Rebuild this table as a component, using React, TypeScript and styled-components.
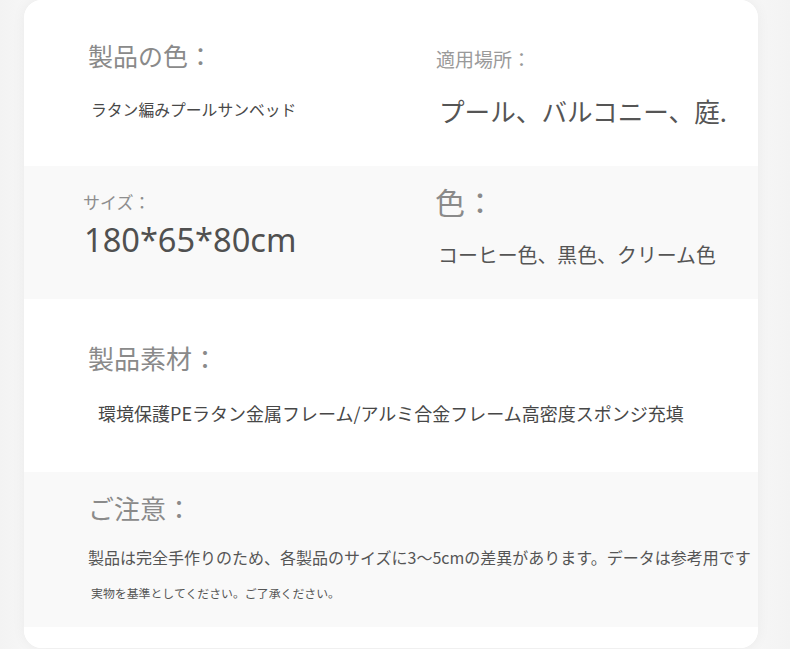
import React from "react";
import styled, { createGlobalStyle } from "styled-components";

const Global = createGlobalStyle`
  html, body { margin: 0; padding: 0; background: #f4f4f4; }
  body { font-family: "Noto Sans CJK JP", "Noto Sans", sans-serif; }
  #root { width: 790px; height: 649px; overflow: hidden; }
`;

const Page = styled.div`
  width: 790px;
  height: 649px;
  padding: 0 32px 1px 24px;
  box-sizing: border-box;
  background: linear-gradient(90deg, #f3f3f3 0px, #f6f6f6 24px, #f6f6f6 758px, #f3f3f3 790px);
`;

const Card = styled.div`
  width: 734px;
  height: 648px;
  background: #ffffff;
  border-radius: 18px;
  box-shadow: 0 0 14px rgba(0, 0, 0, 0.05);
  overflow: hidden;
  display: flex;
  flex-direction: column;
`;

const Section = styled.section<{ $tone: "white" | "gray"; $h: number }>`
  height: ${(p) => p.$h}px;
  flex: none;
  background: ${(p) => (p.$tone === "gray" ? "#f9f9f9" : "#ffffff")};
  display: grid;
  grid-template-columns: 348px 1fr;
  padding-left: 59px;
  box-sizing: border-box;
`;

const Field = styled.div<{ $top: number; $span?: boolean }>`
  display: flex;
  flex-direction: column;
  align-items: flex-start;
  padding-top: ${(p) => p.$top}px;
  ${(p) => (p.$span ? "grid-column: 1 / -1;" : "")}
`;

const Label = styled.div<{ $size: number; $color: string; $x: number }>`
  font-size: ${(p) => p.$size}px;
  line-height: 1;
  color: ${(p) => p.$color};
  margin-left: ${(p) => p.$x}px;
  white-space: nowrap;
`;

const Value = styled.div<{ $size: number; $color: string; $x: number; $gap: number; $sans?: boolean }>`
  font-size: ${(p) => p.$size}px;
  line-height: 1;
  color: ${(p) => p.$color};
  margin-left: ${(p) => p.$x}px;
  margin-top: ${(p) => p.$gap}px;
  white-space: nowrap;
  font-family: ${(p) => (p.$sans ? '"Noto Sans", "Noto Sans CJK JP", sans-serif' : '"Noto Sans CJK JP", sans-serif')};
`;

const Spacer = styled.div`
  flex: 1;
  background: #ffffff;
`;

export default function App() {
  return (
    <>
      <Global />
      <Page>
        <Card>
          <Section $tone="white" $h={166}>
            <Field $top={43}>
              <Label $size={25} $color="#8a8a8a" $x={5}>製品の色：</Label>
              <Value $size={15.8} $color="#484848" $x={8} $gap={34}>ラタン編みプールサンベッド</Value>
            </Field>
            <Field $top={49}>
              <Label $size={19} $color="#9a9a9a" $x={5}>適用場所：</Label>
              <Value $size={25.6} $color="#555555" $x={8} $gap={30}>プール、バルコニー、庭.</Value>
            </Field>
          </Section>
          <Section $tone="gray" $h={133}>
            <Field $top={27}>
              <Label $size={17} $color="#8e8e8e" $x={0}>サイズ：</Label>
              <Value $size={32.6} $color="#505050" $x={1} $gap={14} $sans>180*65*80cm</Value>
            </Field>
            <Field $top={20}>
              <Label $size={30} $color="#8a8a8a" $x={4}>色：</Label>
              <Value $size={19.9} $color="#555555" $x={7} $gap={29}>コーヒー色、黒色、クリーム色</Value>
            </Field>
          </Section>
          <Section $tone="white" $h={173}>
            <Field $top={46} $span>
              <Label $size={26} $color="#8a8a8a" $x={5}>製品素材：</Label>
              <Value $size={18} $color="#474747" $x={15} $gap={33}>環境保護PEラタン金属フレーム/アルミ合金フレーム高密度スポンジ充填</Value>
            </Field>
          </Section>
          <Section $tone="gray" $h={155}>
            <Field $top={23} $span>
              <Label $size={26} $color="#8a8a8a" $x={5}>ご注意：</Label>
              <Value $size={16} $color="#555555" $x={5} $gap={28}>製品は完全手作りのため、各製品のサイズに3〜5cmの差異があります。データは参考用です</Value>
              <Value $size={11.9} $color="#555555" $x={8} $gap={22}>実物を基準としてください。ご了承ください。</Value>
            </Field>
          </Section>
          <Spacer />
        </Card>
      </Page>
    </>
  );
}
